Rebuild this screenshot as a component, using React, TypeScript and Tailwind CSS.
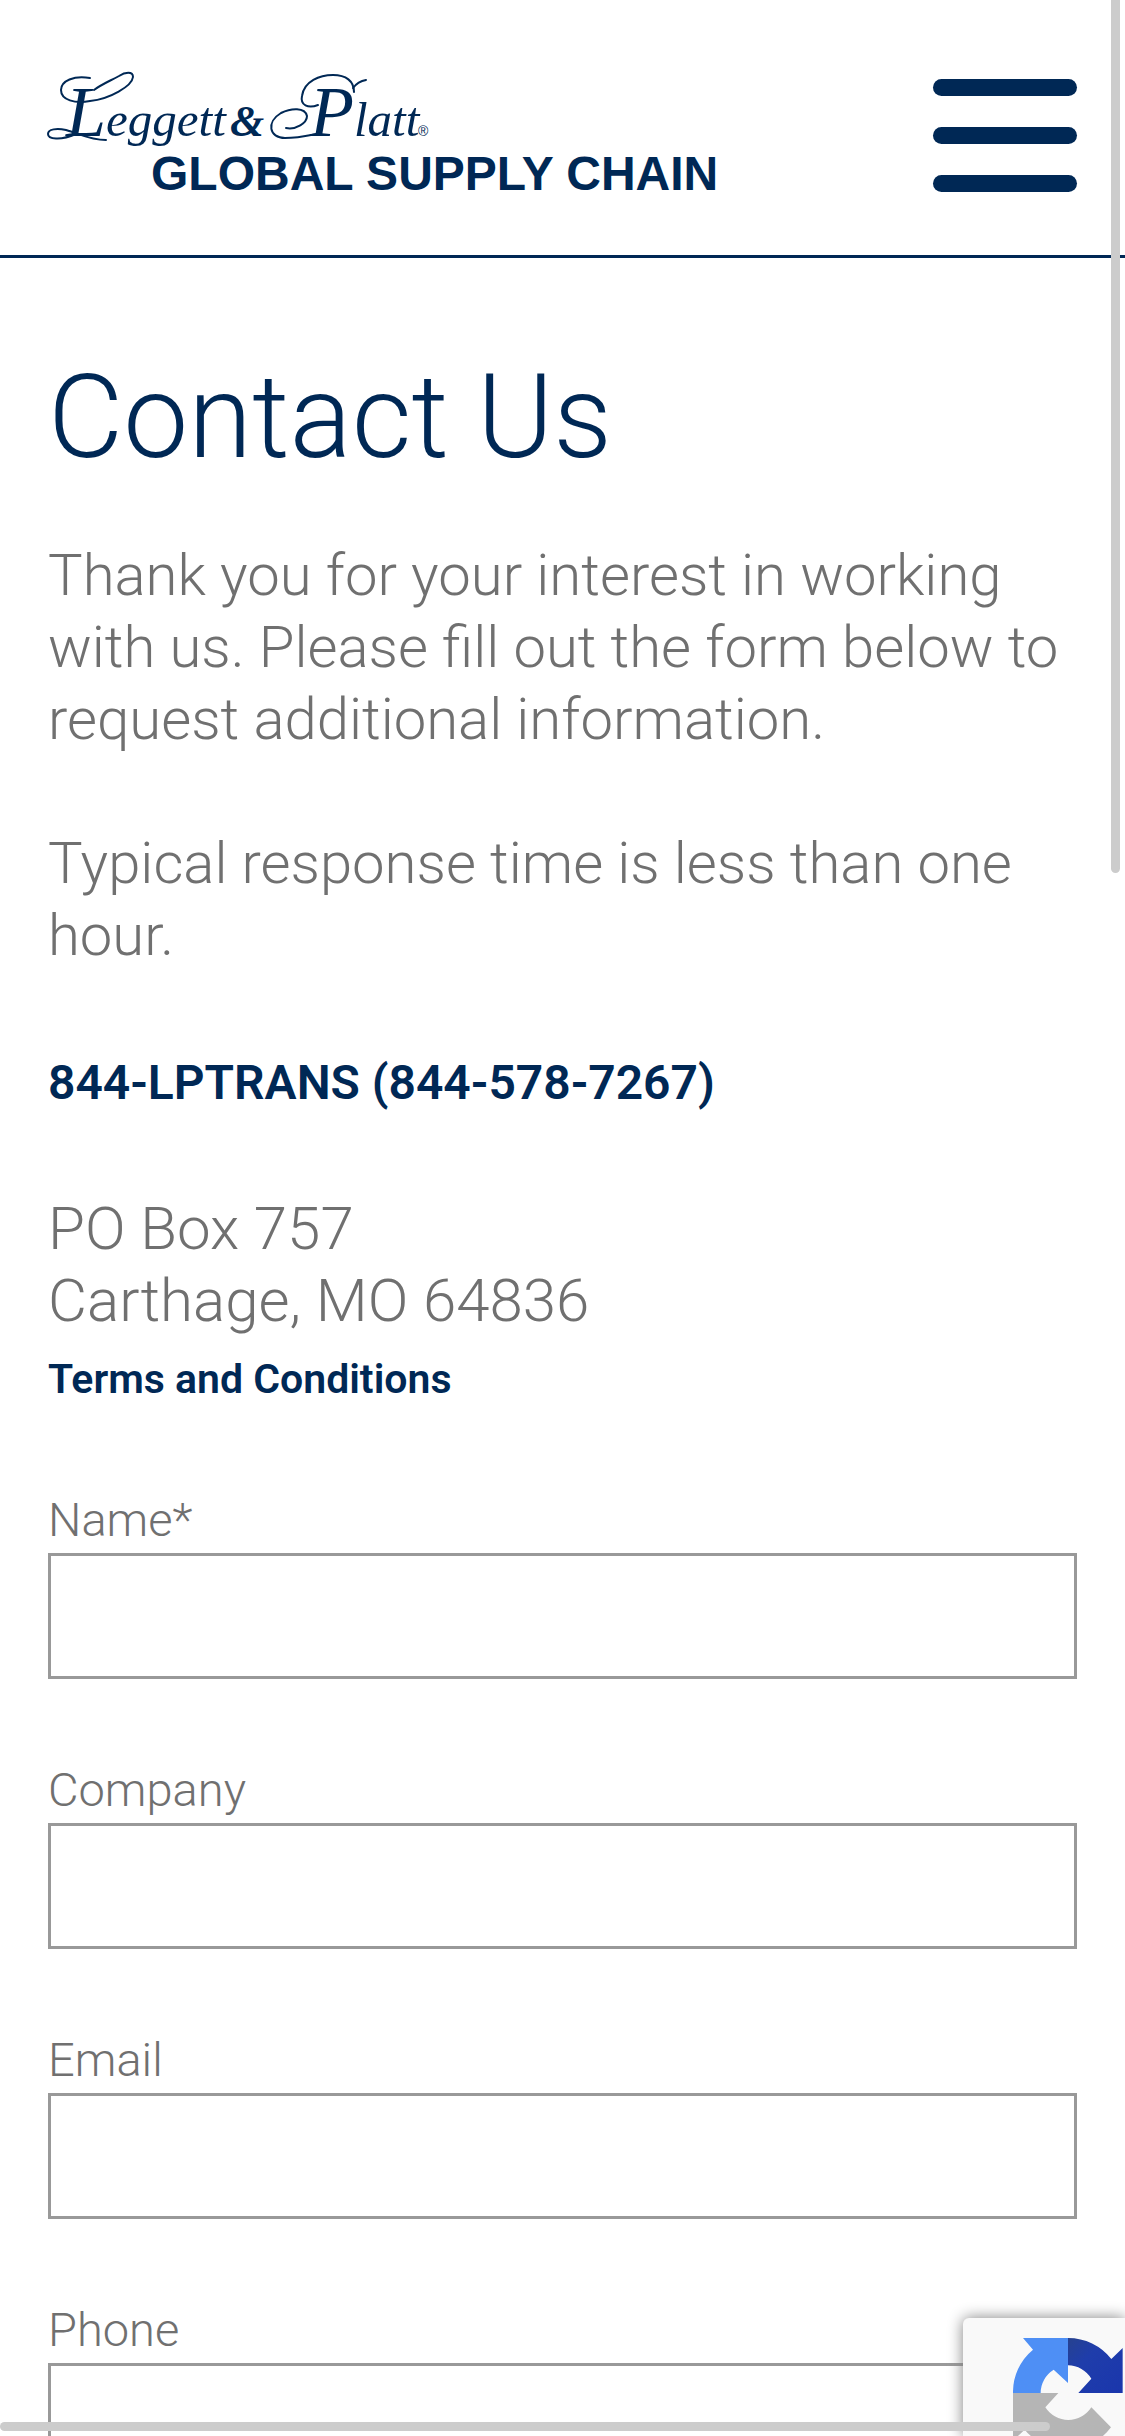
import { useState } from "react";

const fields = [
  { name: "name", label: "Name*", type: "text" },
  { name: "company", label: "Company", type: "text" },
  { name: "email", label: "Email", type: "email" },
  { name: "phone", label: "Phone", type: "tel" },
];

function Logo() {
  return (
    <svg
      viewBox="0 -12 672 144"
      className="block w-[672px] overflow-visible"
      fill="#002855"
      role="img"
      aria-label="Leggett & Platt Global Supply Chain"
    >
      {/* swashes around the two script capitals */}
      <g fill="none" stroke="#002855" strokeWidth="2" strokeLinecap="round">
        <path d="M42 6C26 3 13 9 13 18C13 28 27 32 42 29C62 27 84 14 85 5C85 -1 77 0 71 4C62 9 54 12 46 18" />
        <path d="M28 62C12 69 0 67 0 62C0 57 9 56 18 58C32 62 42 68 58 68" />
        <path d="M270 33C260 37 252 33 254 24C256 9 272 3 285 3C298 3 306 9 306 20" />
        <path d="M238 56C248 58 259 51 259 44C257 35 243 36 233 41C218 50 221 66 237 66C249 66 258 64 268 62" />
        <path d="M305 16C308 12 312 9 318 8" />
      </g>
      <text y="64" fontFamily="'Liberation Serif', serif" fontStyle="italic" fontSize="49">
        <tspan x="18" fontSize="72">L</tspan>
        <tspan>eggett</tspan>
        <tspan x="182" fontSize="44" fontWeight="bold">&amp;</tspan>
        <tspan x="262" fontSize="72">P</tspan>
        <tspan>latt</tspan>
      </text>
      <text x="370" y="64" fontSize="14" fontFamily="'Liberation Sans', sans-serif">®</text>
      <text x="103" y="118" fontFamily="'Liberation Sans', sans-serif" fontWeight="bold" fontSize="48">
        GLOBAL SUPPLY CHAIN
      </text>
    </svg>
  );
}

function RecaptchaBadge() {
  return (
    <div className="fixed bottom-0 right-0 h-[118px] w-[162px] overflow-hidden rounded-tl-md bg-[#f9f9f9] pl-[50px] pt-5 shadow-[0_0_15px_gray]">
      <svg viewBox="0 0 330 330" className="h-[110px] w-[110px]" role="img" aria-label="reCAPTCHA">
        <defs>
          <linearGradient id="navy" x1="0" y1="0" x2="1" y2="1">
            <stop offset="0" stopColor="#27428f" />
            <stop offset="0.35" stopColor="#1f3dab" />
            <stop offset="1" stopColor="#1a36ac" />
          </linearGradient>
        </defs>
        <path fill="#4e8ff5" d="M30 0H165V135L122 95A82 82 0 0 0 83 165H0A165 165 0 0 1 60 35Z" />
        <path fill="url(#navy)" d="M165 0A165 165 0 0 1 295 63L329 30V165H196L235 122A82 82 0 0 0 165 82Z" />
        <path fill="#b5b5b5" d="M0 165H136L97 208A82 82 0 0 0 235 208L294 268A165 165 0 0 1 35 275L0 308Z" />
      </svg>
    </div>
  );
}

export default function App() {
  const [form, setForm] = useState<Record<string, string>>({});

  const handleInputChange = (e: React.ChangeEvent<HTMLInputElement>) => {
    const { name, value } = e.target;
    setForm({ ...form, [name]: value });
  };

  return (
    <div className="h-screen overflow-auto bg-white font-['Roboto',sans-serif] font-light text-[#707070] [scrollbar-width:none]">
      <header className="flex items-start justify-between border-b-3 border-[#002855] px-12 pb-[51px] pt-[60px]">
        <a href="#">
          <Logo />
        </a>
        <button type="button" aria-label="Open menu" className="mt-[19px] flex w-36 flex-col gap-[31px]">
          <span className="h-[17px] w-full rounded-full bg-[#002855]" />
          <span className="h-[17px] w-full rounded-full bg-[#002855]" />
          <span className="h-[17px] w-full rounded-full bg-[#002855]" />
        </button>
      </header>

      <main className="px-12 pb-24 pt-[87px]">
        <h1 className="text-[116px] leading-[144px] text-[#002855]">Contact Us</h1>

        <div className="mt-[50px] text-[58px] leading-[72px]">
          <p>
            Thank you for your interest in working with us. Please fill out the form below to request additional
            information.
          </p>
          <p className="mt-[72px]">Typical response time is less than one hour.</p>
          <p className="mt-[76px] text-[48px] font-semibold text-[#002855]">
            <a href="tel:8445787267">844-LPTRANS (844-578-7267)</a>
          </p>
          <address className="mt-[74px] text-[60px] not-italic">
            PO Box 757
            <br />
            Carthage, MO 64836
          </address>
          <p className="mt-[6px] text-[41px] font-semibold text-[#002855]">
            <a href="#">Terms and Conditions</a>
          </p>
        </div>

        <form className="mt-[75px] flex flex-col gap-[81px]">
          {fields.map((field) => (
            <div key={field.name} className="flex flex-col gap-[3px]">
              <label htmlFor={field.name} className="text-[47px] leading-[60px]">
                {field.label}
              </label>
              <input
                type={field.type}
                name={field.name}
                id={field.name}
                value={form[field.name] ?? ""}
                onChange={handleInputChange}
                className="h-[126px] w-full border-3 border-[#999] px-6 text-[47px]"
              />
            </div>
          ))}
        </form>
      </main>

      <RecaptchaBadge />

      {/* overlay scroll indicators */}
      <div className="fixed right-[5px] top-0 h-[873px] w-[9px] rounded-b-full bg-[#ccc]" />
      <div className="fixed bottom-[5px] left-0 right-[75px] h-[9px] rounded-full bg-[#ccc]" />
    </div>
  );
}
